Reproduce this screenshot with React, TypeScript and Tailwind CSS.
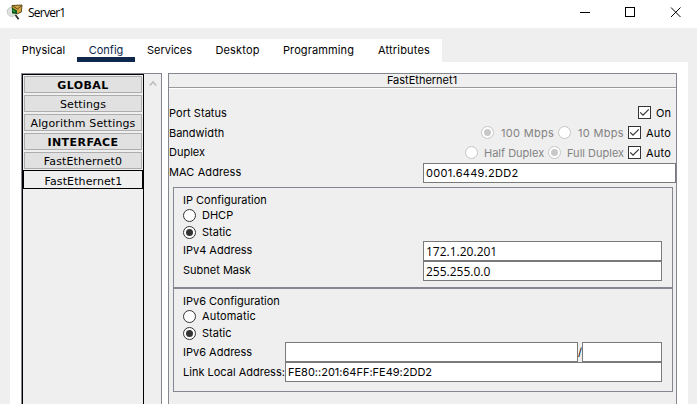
import type { ReactNode } from "react";

function AppIcon() {
  return (
    <svg width="17" height="17" viewBox="0 0 17 17" className="mt-[4px] ml-[6px] shrink-0">
      <circle cx="5.8" cy="7.8" r="4.6" fill="#dfe3df" stroke="#c3c8c3" strokeWidth="1" />
      <path d="M6 1.5 L16 1 L15.4 8 L11 10 L6.5 6 Z" fill="#d3a445" stroke="#54400f" strokeWidth=".9" />
      <path d="M7 2 L11.4 5 L15.4 1.8" fill="none" stroke="#54400f" strokeWidth=".9" />
      <path d="M6 3.5 L11 6.5 L11 10 L6 9.5 Z" fill="#0f5a1a" />
      <path d="M7 6 L9 8" stroke="#2fa13a" strokeWidth="1.2" />
      <path d="M9.5 11 L12.6 15.2" stroke="#2b2b2b" strokeWidth="1.7" />
    </svg>
  );
}

function Tab({ label, className, active }: { label: string; className: string; active?: boolean }) {
  return (
    <div
      className={`flex h-[23px] shrink-0 justify-center border-b-[5px] text-[11px] leading-[22px] whitespace-nowrap ${
        active ? "border-[#0d274d] text-[#0d274d]" : "border-transparent text-black"
      } ${className}`}
    >
      {label}
    </div>
  );
}

function SideItem({ label, bold }: { label: string; bold?: boolean }) {
  return (
    <div
      className={`flex h-[17px] items-center justify-center border border-[#adadad] bg-[#e1e1e1] pt-[2px] text-[11px] leading-none whitespace-nowrap ${
        bold ? "font-bold tracking-[0.45px]" : "tracking-[0.14px]"
      }`}
    >
      {label}
    </div>
  );
}

function Radio({ checked, disabled }: { checked?: boolean; disabled?: boolean }) {
  const line = disabled ? "#c4c4c4" : "#333333";
  return (
    <svg width="13" height="13" viewBox="0 0 13 13" className="shrink-0">
      <circle cx="6.5" cy="6.5" r="6" fill="#fff" stroke={line} />
      {checked && <circle cx="6.5" cy="6.5" r="3.5" fill={disabled ? "#c8c8c8" : "#333333"} />}
    </svg>
  );
}

function Check() {
  return (
    <svg width="13" height="13" viewBox="0 0 13 13" className="shrink-0">
      <rect x=".5" y=".5" width="12" height="12" fill="#fff" stroke="#333" />
      <path d="M2.2 6.4 L5 9.2 L10.8 3.4" fill="none" stroke="#333" strokeWidth="1.2" />
    </svg>
  );
}

function Field({ className, children }: { className: string; children?: ReactNode }) {
  return (
    <div className={`h-5 shrink-0 border border-[#7a7a7a] bg-white pl-[2px] leading-[19px] whitespace-nowrap ${className}`}>
      {children}
    </div>
  );
}

function Option({ label, checked, className }: { label: string; checked?: boolean; className: string }) {
  return (
    <div className={`flex h-[13px] items-center gap-[6px] leading-[13px] ${className}`}>
      <Radio checked={checked} />
      <span>{label}</span>
    </div>
  );
}

export default function App() {
  return (
    <div className="flex h-[404px] w-[697px] flex-col overflow-hidden bg-[#efefef] font-['Inter','Liberation_Sans',sans-serif] text-[11px] text-black [font-feature-settings:'calt'_0]">
      <header className="flex h-7 shrink-0 bg-white">
        <AppIcon />
        <span className="ml-[5px] grow font-['Open_Sans',sans-serif] text-[12px] leading-[26px] tracking-[-0.75px]">Server1</span>
        <svg width="112" height="24" viewBox="0 0 112 24" fill="none" stroke="#000" className="mr-[5px] shrink-0">
          <path d="M0 12.5 H10" />
          <rect x="45.5" y="7.5" width="9" height="9" />
          <path d="M91 7.5 L100.5 17 M100.5 7.5 L91 17" />
        </svg>
      </header>

      <nav className="mt-[11px] ml-[10px] flex h-[23px] w-[432px] shrink-0 bg-white">
        <Tab label="Physical" className="w-[67px]" />
        <Tab label="Config" active className="w-[58px]" />
        <Tab label="Services" className="w-[69px]" />
        <Tab label="Desktop" className="w-[67px] tracking-[0.15px]" />
        <Tab label="Programming" className="w-[95px] tracking-[0.12px]" />
        <Tab label="Attributes" className="w-[76px] tracking-[0.2px]" />
      </nav>

      <main className="ml-[10px] flex w-[678px] grow items-stretch bg-white pt-[11px] pl-[11px]">
        <aside className="flex w-[141px] shrink-0 border-t border-r border-l border-[#848690] bg-[#efefef]">
          <div className="w-[122px] shrink-0 border-t border-r border-l border-black font-['DejaVu_Sans',sans-serif]">
            <div className="flex flex-col gap-[2px] p-px">
              <SideItem label="GLOBAL" bold />
              <SideItem label="Settings" />
              <SideItem label="Algorithm Settings" />
              <SideItem label="INTERFACE" bold />
              <SideItem label="FastEthernet0" />
            </div>
            <div className="flex h-[19px] items-center justify-center border border-black text-[11px] leading-none tracking-[0.1px]">
              <span className="pt-[3px] pl-px">FastEthernet1</span>
            </div>
          </div>
          <svg width="8" height="7" viewBox="0 0 8 7" className="mt-[6px] ml-[5px]">
            <path d="M.8 5.5 L4 2 L7.2 5.5" fill="none" stroke="#bfbfbf" strokeWidth="1.8" />
          </svg>
        </aside>

        <section className="ml-[6px] w-[509px] shrink-0 border-t border-r border-l border-[#848690] bg-[#efefef]">
          <div className="h-[14px] border-b border-[#9a9a9a] pr-px text-center leading-[13px]">FastEthernet1</div>
          <div className="h-px bg-white" />

          <div className="mt-[14px] flex h-5 items-center pr-[5px]">
            <span className="grow tracking-[0.05px]">Port Status</span>
            <div className="flex h-5 items-center gap-[5px] pb-px">
              <Check />
              <span className="pt-[2px]">On</span>
            </div>
          </div>
          <div className="flex h-5 items-center pr-[5px]">
            <span className="grow">Bandwidth</span>
            <div className="flex h-5 items-center pb-px text-[#838383]">
              <Radio checked disabled />
              <span className="ml-[7px] w-[57px] pt-[2px] tracking-[0.3px]">100 Mbps</span>
              <Radio disabled />
              <span className="ml-[7px] w-[50px] pt-[2px] tracking-[0.3px]">10 Mbps</span>
              <Check />
              <span className="ml-[5px] w-[25px] pt-[2px] tracking-[0.2px] text-black">Auto</span>
            </div>
          </div>
          <div className="flex h-5 items-center pr-[5px]">
            <span className="grow pb-[2px]">Duplex</span>
            <div className="flex h-5 items-center pb-px text-[#838383]">
              <Radio disabled />
              <span className="ml-[6px] w-[64px] pt-[2px]">Half Duplex</span>
              <Radio checked disabled />
              <span className="ml-[6px] w-[61px] pt-[2px]">Full Duplex</span>
              <Check />
              <span className="ml-[5px] w-[25px] pt-[2px] tracking-[0.2px] text-black">Auto</span>
            </div>
          </div>
          <div className="flex h-5">
            <span className="w-[254px] leading-[18px] tracking-[0.1px]">MAC Address</span>
            <Field className="w-[253px] tracking-[0.3px]">0001.6449.2DD2</Field>
          </div>

          <div className="mt-[4px] ml-[4px] h-[101px] w-[500px] border border-[#848690] pl-[9px]">
            <div className="h-[21px] leading-[25px]">IP Configuration</div>
            <Option label="DHCP" className="" />
            <Option label="Static" checked className="mt-[4px]" />
            <div className="mt-[2px] flex">
              <span className="w-[240px] leading-[18px]">IPv4 Address</span>
              <Field className="w-[239px] font-['Open_Sans',sans-serif] text-[12px]">172.1.20.201</Field>
            </div>
            <div className="flex">
              <span className="w-[240px] leading-[18px]">Subnet Mask</span>
              <Field className="w-[239px] font-['Open_Sans',sans-serif] text-[12px]">255.255.0.0</Field>
            </div>
          </div>

          <div className="ml-[4px] h-[104px] w-[500px] border border-[#848690] pl-[9px]">
            <div className="h-[21px] leading-[24px]">IPv6 Configuration</div>
            <Option label="Automatic" className="tracking-[0.15px]" />
            <Option label="Static" checked className="mt-[4px]" />
            <div className="mt-[2px] flex">
              <span className="w-[102px] shrink-0 leading-5">IPv6 Address</span>
              <Field className="w-[293px]" />
              <span className="w-[4px] shrink-0 leading-5">/</span>
              <Field className="w-[80px]" />
            </div>
            <div className="flex">
              <span className="w-[102px] shrink-0 leading-5 whitespace-nowrap">Link Local Address:</span>
              <Field className="w-[377px]">FE80::201:64FF:FE49:2DD2</Field>
            </div>
          </div>
        </section>
      </main>
    </div>
  );
}
